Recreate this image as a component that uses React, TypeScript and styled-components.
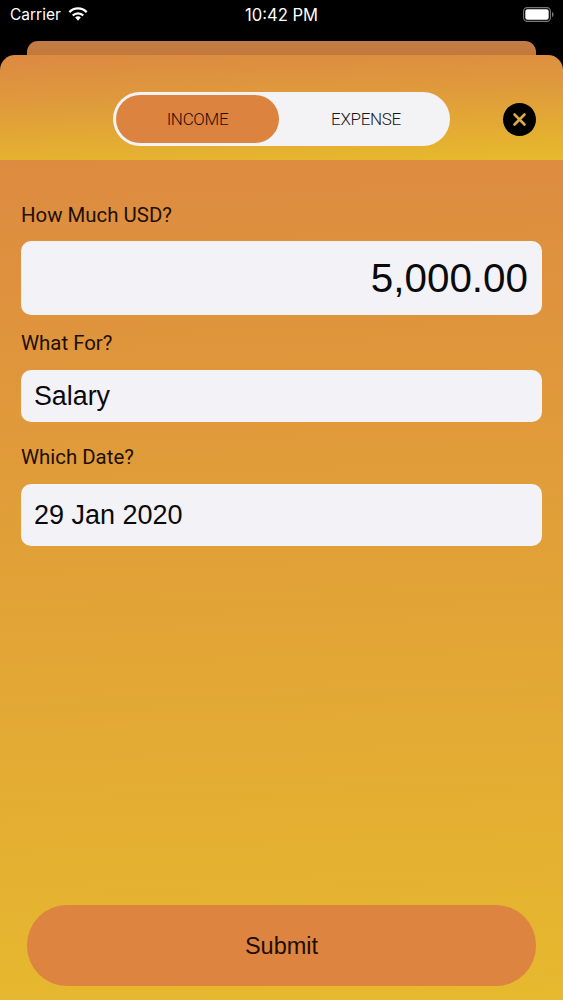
import React from 'react'
import styled, { createGlobalStyle } from 'styled-components'

const GlobalStyle = createGlobalStyle`
  html, body {
    margin: 0;
    padding: 0;
    background: #000;
  }
  * {
    box-sizing: border-box;
  }
`

const Page = styled.div`
  width: 563px;
  height: 1000px;
  display: flex;
  flex-direction: column;
  overflow: hidden;
  background: #000;
  font-family: 'Liberation Sans', Arial, sans-serif;
`

const StatusBar = styled.div`
  height: 41px;
  flex-shrink: 0;
  display: grid;
  grid-template-columns: 1fr auto 1fr;
  align-items: center;
  padding: 0 9px 12px 10px;
  color: #fff;
  font-family: Inter, 'Liberation Sans', sans-serif;
  font-size: 15.5px;
`

const Carrier = styled.div`
  display: flex;
  align-items: center;
  gap: 7px;
`

const Clock = styled.div`
  font-size: 16.6px;
  margin-right: 1px;
`

const Battery = styled.div`
  justify-self: end;
  display: flex;
  align-items: center;
`

const BackSheet = styled.div`
  height: 14px;
  flex-shrink: 0;
  margin: 0 27px;
  border-radius: 11px 11px 0 0;
  background: linear-gradient(180deg, #c27c48 0%, #c4793a 100%);
`

const Sheet = styled.div`
  flex: 1;
  display: flex;
  flex-direction: column;
  border-radius: 15px 15px 0 0;
  overflow: hidden;
`

const Header = styled.div`
  height: 105px;
  flex-shrink: 0;
  display: grid;
  grid-template-columns: 1fr 337px 1fr;
  align-items: center;
  padding-top: 37px;
  padding-bottom: 14px;
  background: linear-gradient(178deg, #dc8a42 0%, #df9a3c 40%, #e7ba2c 100%);
`

const Toggle = styled.div`
  grid-column: 2;
  height: 54px;
  padding: 3px;
  display: grid;
  grid-template-columns: 163px 1fr;
  border-radius: 27px;
  background: #f3f3f6;
`

const ToggleOption = styled.div<{ $active?: boolean }>`
  display: flex;
  align-items: center;
  justify-content: center;
  border-radius: 24px;
  font-family: Roboto, 'Liberation Sans', sans-serif;
  font-weight: 300;
  font-size: 17px;
  letter-spacing: -0.3px;
  padding-left: ${({ $active }) => ($active ? '0' : '6px')};
  color: ${({ $active }) => ($active ? '#1f0c04' : '#17171a')};
  background: ${({ $active }) => ($active ? '#dd8340' : 'transparent')};
`

const CloseButton = styled.div`
  grid-column: 3;
  justify-self: end;
  margin-right: 27px;
  width: 33px;
  height: 33px;
  border-radius: 50%;
  background: #000;
  display: flex;
  align-items: center;
  justify-content: center;
`

const Body = styled.div`
  flex: 1;
  display: flex;
  flex-direction: column;
  padding: 0 21px 14px;
  background: linear-gradient(178deg, #dd8b40 0%, #e6b92e 100%);
`

const Label = styled.div<{ $top: number }>`
  margin-top: ${({ $top }) => $top}px;
  height: 24px;
  line-height: 24px;
  font-family: Roboto, 'Liberation Sans', sans-serif;
  font-size: 20.4px;
  color: #1d0f06;
`

const Field = styled.div<{ $height: number; $size: number; $right?: boolean }>`
  height: ${({ $height }) => $height}px;
  margin-top: ${({ $height }) => ($height === 74 ? 14 : 15)}px;
  padding: 1px 14px 0 13px;
  display: flex;
  align-items: center;
  justify-content: ${({ $right }) => ($right ? 'flex-end' : 'flex-start')};
  border-radius: 10px;
  background: #f2f2f7;
  color: #0a0a0c;
  font-size: ${({ $size }) => $size}px;
`

const SubmitButton = styled.div`
  margin: auto 6px 0;
  height: 81px;
  padding-top: 2px;
  border-radius: 40px;
  background: #dd8440;
  display: flex;
  align-items: center;
  justify-content: center;
  font-size: 23.5px;
  color: #1e0d05;
`

const WifiIcon = () => (
  <svg width="20" height="15" viewBox="0 0 20 15" fill="none" stroke="#fff" strokeWidth="2.3">
    <path d="M1.300 5.100C3.600 2.800 6.600 1.400 10 1.400s6.400 1.400 8.700 3.700" />
    <path d="M4.700 8.500C6.100 7.100 7.900 6.300 10 6.300s3.900.8 5.300 2.200" />
    <path d="M10 9.300c-1.100 0-2.100.4-2.800 1.100L10 13.800l2.800-3.400C12.100 9.700 11.100 9.300 10 9.300z" fill="#fff" stroke="none" />
  </svg>
)

const BatteryIcon = () => (
  <svg width="31" height="15" viewBox="0 0 31 15">
    <rect x="0.6" y="0.6" width="26.8" height="13.8" rx="3.6" fill="none" stroke="#77777b" strokeWidth="1.1" />
    <rect x="2.3" y="2.3" width="23.4" height="10.4" rx="2.2" fill="#fff" />
    <path d="M29 5v5c.9-.3 1.600-1.300 1.600-2.500S29.900 5.300 29 5z" fill="#77777b" />
  </svg>
)

const CloseIcon = () => (
  <svg width="15" height="15" viewBox="0 0 15 15" fill="none" stroke="#d9ab42" strokeWidth="2.6" strokeLinecap="round">
    <path d="M2.500 2.500l10 10M12.500 2.500l-10 10" />
  </svg>
)

export default function App() {
  return (
    <Page>
      <GlobalStyle />
      <StatusBar>
        <Carrier>
          Carrier
          <WifiIcon />
        </Carrier>
        <Clock>10:42 PM</Clock>
        <Battery>
          <BatteryIcon />
        </Battery>
      </StatusBar>
      <BackSheet />
      <Sheet>
        <Header>
          <Toggle>
            <ToggleOption $active>INCOME</ToggleOption>
            <ToggleOption>EXPENSE</ToggleOption>
          </Toggle>
          <CloseButton>
            <CloseIcon />
          </CloseButton>
        </Header>
        <Body>
          <Label $top={43}>How Much USD?</Label>
          <Field $height={74} $size={40.4} $right>
            5,000.00
          </Field>
          <Label $top={16}>What For?</Label>
          <Field $height={52} $size={26.8}>
            Salary
          </Field>
          <Label $top={23}>Which Date?</Label>
          <Field $height={62} $size={27}>
            29 Jan 2020
          </Field>
          <SubmitButton>Submit</SubmitButton>
        </Body>
      </Sheet>
    </Page>
  )
}
